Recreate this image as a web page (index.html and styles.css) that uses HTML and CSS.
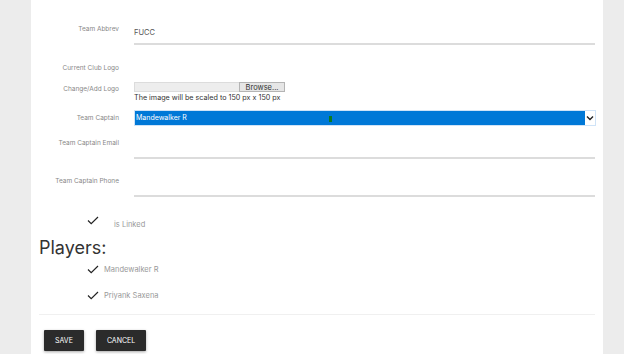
FILE: index.html
```html
<!DOCTYPE html>
<html lang="en">
<head>
    <meta charset="UTF-8">
    <meta name="viewport" content="width=device-width, initial-scale=1.0">
    <title>Edit Team</title>
    <link rel="stylesheet" href="styles.css">
</head>
<body>
    <div class="card">
        <form class="team-form">
            <div class="form-row row-abbrev">
                <label class="form-label">Team Abbrev</label>
                <div class="form-field">
                    <div class="text-input">FUCC</div>
                </div>
            </div>

            <div class="form-row row-current-logo">
                <label class="form-label">Current Club Logo</label>
                <div class="form-field"></div>
            </div>

            <div class="form-row row-logo">
                <label class="form-label">Change/Add Logo</label>
                <div class="form-field">
                    <div class="file-input">
                        <span class="file-name"></span>
                        <span class="file-browse">Browse...</span>
                    </div>
                    <div class="file-hint">The image will be scaled to 150 px x 150 px</div>
                </div>
            </div>

            <div class="form-row row-captain">
                <label class="form-label">Team Captain</label>
                <div class="form-field">
                    <div class="select-box">
                        <span class="select-value">Mandewalker R</span>
                        <span class="select-caret"></span>
                        <span class="select-arrow">
                            <svg width="8" height="6" viewBox="0 0 8 6">
                                <polyline points="1,1.5 4,4.5 7,1.5" fill="none" stroke="#222" stroke-width="1.4"/>
                            </svg>
                        </span>
                    </div>
                </div>
            </div>

            <div class="form-row row-email">
                <label class="form-label">Team Captain Email</label>
                <div class="form-field">
                    <div class="text-input tall"></div>
                </div>
            </div>

            <div class="form-row row-phone">
                <label class="form-label">Team Captain Phone</label>
                <div class="form-field">
                    <div class="text-input tall"></div>
                </div>
            </div>

            <div class="check-row linked">
                <svg class="check" width="12" height="9" viewBox="0 0 12 9">
                    <polyline points="1,4.5 4.2,7.6 11,1" fill="none" stroke="#222" stroke-width="1.2"/>
                </svg>
                <span class="check-text">is Linked</span>
            </div>

            <h2 class="players-title">Players:</h2>

            <div class="check-row player">
                <svg class="check" width="12" height="9" viewBox="0 0 12 9">
                    <polyline points="1,4.5 4.2,7.6 11,1" fill="none" stroke="#222" stroke-width="1.2"/>
                </svg>
                <span class="check-text">Mandewalker R</span>
            </div>
            <div class="check-row player">
                <svg class="check" width="12" height="9" viewBox="0 0 12 9">
                    <polyline points="1,4.5 4.2,7.6 11,1" fill="none" stroke="#222" stroke-width="1.2"/>
                </svg>
                <span class="check-text">Priyank Saxena</span>
            </div>

            <div class="divider"></div>

            <div class="actions">
                <button type="button" class="btn">SAVE</button>
                <button type="button" class="btn">CANCEL</button>
            </div>
        </form>
    </div>
</body>
</html>
```

FILE: styles.css
```css
body {
    margin: 0;
    background: #ececec;
    font-family: 'Inter', 'Open Sans', sans-serif;
    height: 354px;
    overflow: hidden;
}

.card {
    background: #ffffff;
    margin-left: 31px;
    width: 572px;
    height: 354px;
    box-sizing: border-box;
    padding: 0 8px;
}

.team-form {
    display: flex;
    flex-direction: column;
}

.form-row {
    display: flex;
    gap: 15px;
}

.form-label {
    width: 80px;
    flex-shrink: 0;
    text-align: right;
    font-size: 6.5px;
    line-height: 10px;
    color: #888;
}

.form-field {
    flex: 1;
}

.row-abbrev {
    margin-top: 21px;
}

.row-abbrev .form-label {
    padding-top: 3px;
}

.text-input {
    height: 24px;
    border-bottom: 2px solid #dcdcdc;
    font-size: 7.5px;
    line-height: 24px;
    color: #555;
    box-sizing: border-box;
}

.text-input.tall {
    height: 21px;
}

.row-current-logo {
    margin-top: 18px;
}

.row-logo {
    margin-top: 9px;
}

.row-logo .form-label {
    padding-top: 2px;
}

.file-input {
    display: flex;
    width: 151px;
    height: 10px;
}

.file-name {
    flex: 1;
    background: #ededed;
    border: 1px solid #dcdcdc;
    border-right: none;
}

.file-browse {
    width: 44px;
    background: #e6e6e6;
    border: 1px solid #b4b4b4;
    font-size: 7.5px;
    line-height: 9px;
    color: #333;
    text-align: center;
}

.file-hint {
    font-size: 7.2px;
    line-height: 10px;
    color: #333;
    margin-top: 1px;
}

.row-captain {
    margin-top: 7px;
}

.row-captain .form-label {
    padding-top: 3px;
}

.select-box {
    position: relative;
    display: flex;
    height: 16px;
    margin-right: -1px;
    border: 1px solid #cfe3f7;
    box-sizing: border-box;
}

.select-value {
    flex: 1;
    background: #0078d7;
    color: #fff;
    font-size: 7px;
    line-height: 14px;
    padding-left: 1px;
}

.select-caret {
    position: absolute;
    left: 194px;
    top: 5px;
    width: 3px;
    height: 6px;
    background: #0b7a1f;
}

.select-arrow {
    width: 10px;
    background: #fff;
    display: flex;
    align-items: center;
    justify-content: center;
}

.row-email {
    margin-top: 12px;
}

.row-phone {
    margin-top: 17px;
}

.check-row {
    display: flex;
    align-items: center;
    padding-left: 48px;
}

.check-row .check {
    flex-shrink: 0;
}

.check-text {
    font-size: 7.5px;
    color: #999;
}

.linked {
    margin-top: 14px;
}

.linked .check-text {
    margin-left: 15px;
    margin-top: 9px;
}

.players-title {
    margin: 7px 0 0;
    font-size: 18px;
    font-weight: 400;
    line-height: 24px;
    color: #333;
}

.player {
    margin-top: 1px;
    height: 16px;
}

.player + .player {
    margin-top: 10px;
}

.player .check-text {
    margin-left: 5px;
}

.divider {
    margin-top: 11px;
    height: 1px;
    background: #f0f0f0;
}

.actions {
    display: flex;
    gap: 12px;
    margin-top: 15px;
    padding-left: 5px;
}

.btn {
    background: #2b2b2b;
    color: #fff;
    border: none;
    border-radius: 1px;
    font-family: inherit;
    font-size: 7px;
    height: 21px;
    padding: 0 11px;
    box-shadow: 0 1px 3px rgba(0, 0, 0, 0.35);
}
```
